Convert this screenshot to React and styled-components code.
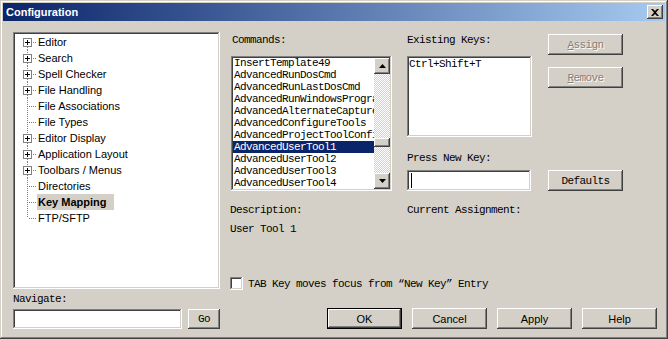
import React from 'react';
import styled, { createGlobalStyle, css } from 'styled-components';

const FACE = '#d4d0c8';

const Global = createGlobalStyle`
  html, body { margin: 0; padding: 0; background: ${FACE}; }
  #root { width: 668px; height: 339px; }
`;

const raised = css`
  box-shadow: inset -1px -1px #404040, inset 1px 1px #ffffff, inset -2px -2px #808080, inset 2px 2px ${FACE};
`;
const sunken = css`
  box-shadow: inset -1px -1px #ffffff, inset 1px 1px #808080, inset -2px -2px ${FACE}, inset 2px 2px #404040;
`;
const mono = css`
  font-family: "Liberation Mono", "DejaVu Sans Mono", monospace;
  font-size: 11px;
  letter-spacing: -0.6px;
  line-height: 12px;
`;
const sans = css`
  font-family: "Liberation Sans", Arial, sans-serif;
  font-size: 11px;
`;

const Window = styled.div`
  width: 668px;
  height: 339px;
  box-sizing: border-box;
  padding: 3px;
  background: ${FACE};
  box-shadow: inset -1px -1px #404040, inset 1px 1px ${FACE}, inset -2px -2px #808080, inset 2px 2px #ffffff;
  display: flex;
  flex-direction: column;
  color: #000;
`;

const TitleBar = styled.div`
  height: 18px;
  flex: none;
  background: linear-gradient(to right, #0a246a, #a6caf0);
  display: flex;
  align-items: center;
  justify-content: space-between;
  padding: 0 2px 0 3px;
`;

const TitleText = styled.span`
  ${sans};
  font-weight: bold;
  color: #fff;
  line-height: 18px;
`;

const CloseButton = styled.div`
  width: 16px;
  height: 14px;
  background: ${FACE};
  ${raised};
  display: flex;
  align-items: center;
  justify-content: center;
`;

const Body = styled.div`
  flex: 1;
  display: flex;
  min-height: 0;
`;

const LeftCol = styled.div`
  width: 207px;
  margin-left: 10px;
  padding-top: 11px;
  display: flex;
  flex-direction: column;
`;

const Tree = styled.div`
  height: 257px;
  box-sizing: border-box;
  background: #fff;
  ${sunken};
  padding: 2px 2px 2px 10px;
`;

const TreeRow = styled.div`
  display: flex;
  align-items: center;
  height: 16px;
`;

const TreeLabel = styled.span`
  ${sans};
  line-height: 16px;
  height: 16px;
  padding: 0 ${(p) => (p.$selected ? 8 : 4)}px 0 1px;
  white-space: nowrap;
  font-weight: ${(p) => (p.$selected ? 'bold' : 'normal')};
  background: ${(p) => (p.$selected ? FACE : 'transparent')};
`;

const Label = styled.div`
  ${mono};
  height: 12px;
  white-space: nowrap;
  padding-left: ${(p) => p.$indent || 0}px;
  margin-top: ${(p) => p.$mt || 0}px;
`;

const NavRow = styled.div`
  display: flex;
  gap: 6px;
  margin-top: 4px;
`;

const Field = styled.div`
  box-sizing: border-box;
  background: #fff;
  ${sunken};
  width: ${(p) => p.$w}px;
  height: ${(p) => p.$h}px;
  margin-top: ${(p) => p.$mt || 0}px;
  margin-left: ${(p) => p.$ml || 0}px;
  padding: ${(p) => p.$pad || '2px'};
`;

const Button = styled.div`
  box-sizing: border-box;
  width: ${(p) => p.$w || 75}px;
  height: ${(p) => p.$h || 21}px;
  margin-top: ${(p) => (p.$auto ? 'auto' : `${p.$mt || 0}px`)};
  background: ${FACE};
  ${raised};
  display: flex;
  align-items: center;
  justify-content: center;
  ${(p) => (p.$sans ? sans : mono)};
  color: ${(p) => (p.$disabled ? '#808080' : '#000')};
  text-shadow: ${(p) => (p.$disabled ? '1px 1px #ffffff' : 'none')};
  ${(p) =>
    p.$default &&
    css`
      border: 1px solid #000;
    `}
`;

const RightCol = styled.div`
  flex: 1;
  margin-left: 10px;
  padding-top: 13px;
  padding-right: 8px;
  display: flex;
  flex-direction: column;
`;

const Grid = styled.div`
  display: grid;
  grid-template-columns: 177px 141px 75px;
  margin-top: ${(p) => p.$mt || 0}px;
`;

const Col = styled.div`
  display: flex;
  flex-direction: column;
`;

const ListBox = styled.div`
  box-sizing: border-box;
  width: 161px;
  height: 135px;
  margin: 10px 0 0 1px;
  background: #fff;
  ${sunken};
  padding: 2px;
  display: flex;
  overflow: hidden;
`;

const Items = styled.div`
  flex: 1;
  overflow: hidden;
  margin-top: -1px;
`;

const Item = styled.div`
  ${mono};
  height: 12px;
  padding-left: 1px;
  white-space: nowrap;
  overflow: hidden;
  background: ${(p) => (p.$selected ? '#0a246a' : 'transparent')};
  color: ${(p) => (p.$selected ? '#fff' : '#000')};
`;

const ScrollBar = styled.div`
  width: 16px;
  flex: none;
  display: flex;
  flex-direction: column;
`;

const Arrow = styled.div`
  width: 16px;
  height: 16px;
  flex: none;
  box-sizing: border-box;
  background: ${FACE};
  ${raised};
  display: flex;
  align-items: center;
  justify-content: center;
`;

const Track = styled.div`
  flex: 1;
  padding-top: 64px;
  background-color: #fff;
  background-image: conic-gradient(${FACE} 25%, #fff 0 50%, ${FACE} 0 75%, #fff 0);
  background-size: 2px 2px;
`;

const Thumb = styled.div`
  height: 9px;
  background: ${FACE};
  ${raised};
`;

const Caret = styled.div`
  width: 1px;
  height: 15px;
  background: #000;
  margin-left: 2px;
`;

const CheckRow = styled.div`
  display: flex;
  align-items: center;
  gap: 5px;
  margin-top: 42px;
`;

const CheckBox = styled.div`
  width: 13px;
  height: 13px;
  box-sizing: border-box;
  background: #fff;
  ${sunken};
`;

const ButtonRow = styled.div`
  display: flex;
  justify-content: flex-end;
  gap: 10px;
  margin-top: 18px;
`;

const dot = { stroke: '#808080', strokeWidth: 1, strokeDasharray: '1 1' };

function Gutter({ expandable, first, last }) {
  const vTop = first ? 8 : 0;
  const vBot = last ? 8 : 16;
  return (
    <svg width="14" height="16" viewBox="0 0 14 16" style={{ flex: 'none', display: 'block' }}>
      {expandable ? (
        <>
          {!first && <line x1="4.5" y1={vTop} x2="4.5" y2="4" style={dot} />}
          {!last && <line x1="4.5" y1="13" x2="4.5" y2={vBot} style={dot} />}
          <line x1="10" y1="8.5" x2="14" y2="8.5" style={dot} />
          <rect x="0.5" y="4.5" width="8" height="8" fill="#fff" stroke="#808080" />
          <line x1="2" y1="8.5" x2="7" y2="8.5" stroke="#000" />
          <line x1="4.5" y1="6" x2="4.5" y2="11" stroke="#000" />
        </>
      ) : (
        <>
          <line x1="4.5" y1={vTop} x2="4.5" y2={vBot} style={dot} />
          <line x1="6" y1="8.5" x2="14" y2="8.5" style={dot} />
        </>
      )}
    </svg>
  );
}

const treeItems = [
  ['Editor', true],
  ['Search', true],
  ['Spell Checker', true],
  ['File Handling', true],
  ['File Associations', false],
  ['File Types', false],
  ['Editor Display', true],
  ['Application Layout', true],
  ['Toolbars / Menus', true],
  ['Directories', false],
  ['Key Mapping', false, true],
  ['FTP/SFTP', false],
];

const commands = [
  'InsertTemplate49',
  'AdvancedRunDosCmd',
  'AdvancedRunLastDosCmd',
  'AdvancedRunWindowsProgram',
  'AdvancedAlternateCapture',
  'AdvancedConfigureTools',
  'AdvancedProjectToolConfig',
  'AdvancedUserTool1',
  'AdvancedUserTool2',
  'AdvancedUserTool3',
  'AdvancedUserTool4',
];

const UpTri = () => (
  <svg width="7" height="4" viewBox="0 0 7 4"><path d="M3.5 0 L7 4 L0 4 Z" fill="#000" /></svg>
);
const DownTri = () => (
  <svg width="7" height="4" viewBox="0 0 7 4"><path d="M0 0 L7 0 L3.5 4 Z" fill="#000" /></svg>
);

export default function App() {
  return (
    <>
      <Global />
      <Window>
        <TitleBar>
          <TitleText>Configuration</TitleText>
          <CloseButton>
            <svg width="8" height="7" viewBox="0 0 8 7">
              <path d="M0 0 H2 L4 2 L6 0 H8 L5 3.5 L8 7 H6 L4 5 L2 7 H0 L3 3.5 Z" fill="#000" />
            </svg>
          </CloseButton>
        </TitleBar>
        <Body>
          <LeftCol>
            <Tree>
              {treeItems.map(([name, exp, sel], i) => (
                <TreeRow key={name}>
                  <Gutter expandable={exp} first={i === 0} last={i === treeItems.length - 1} />
                  <TreeLabel $selected={sel}>{name}</TreeLabel>
                </TreeRow>
              ))}
            </Tree>
            <Label $mt={4}>Navigate:</Label>
            <NavRow>
              <Field $w={169} $h={20} />
              <Button $w={32} $h={20}>Go</Button>
            </NavRow>
          </LeftCol>
          <RightCol>
            <Grid>
              <Col>
                <Label $indent={2}>Commands:</Label>
                <ListBox>
                  <Items>
                    {commands.map((c) => (
                      <Item key={c} $selected={c === 'AdvancedUserTool1'}>{c}</Item>
                    ))}
                  </Items>
                  <ScrollBar>
                    <Arrow><UpTri /></Arrow>
                    <Track><Thumb /></Track>
                    <Arrow><DownTri /></Arrow>
                  </ScrollBar>
                </ListBox>
              </Col>
              <Col>
                <Label>Existing Keys:</Label>
                <Field $w={125} $h={81} $mt={10} $pad="2px 1px">
                  <Item>Ctrl+Shift+T</Item>
                </Field>
                <Label $mt={15}>Press New Key:</Label>
                <Field $w={124} $h={21} $mt={6} $pad="3px 2px">
                  <Caret />
                </Field>
              </Col>
              <Col>
                <Button $disabled><u>A</u>ssign</Button>
                <Button $disabled $mt={12}><u>R</u>emove</Button>
                <Button $auto>Defaults</Button>
              </Col>
            </Grid>
            <Grid $mt={13}>
              <Label>Description:</Label>
              <Label>Current Assignment:</Label>
            </Grid>
            <Label $mt={7}>User Tool 1</Label>
            <CheckRow>
              <CheckBox />
              <Label>TAB Key moves focus from “New Key” Entry</Label>
            </CheckRow>
            <ButtonRow>
              <Button $sans $default>OK</Button>
              <Button $sans>Cancel</Button>
              <Button $sans>Apply</Button>
              <Button $sans>Help</Button>
            </ButtonRow>
          </RightCol>
        </Body>
      </Window>
    </>
  );
}
